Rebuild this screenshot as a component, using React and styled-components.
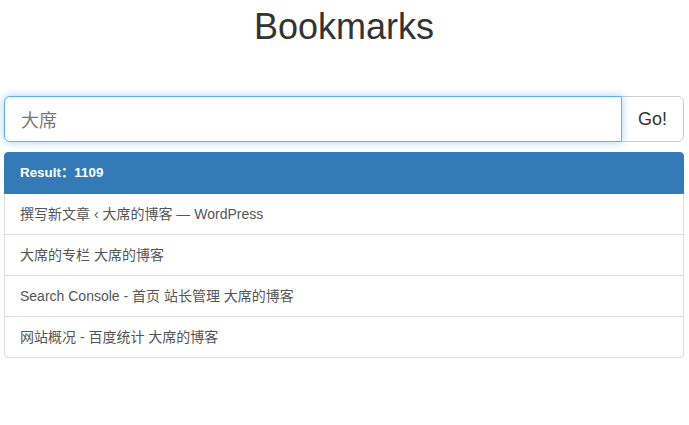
import React from "react";
import styled, { createGlobalStyle } from "styled-components";

const GlobalStyle = createGlobalStyle`
  * { box-sizing: border-box; }
  html, body { margin: 0; padding: 0; background: #fff; }
  body {
    font-family: "Liberation Sans", Arial, "Noto Sans CJK SC", sans-serif;
    font-size: 14px;
    line-height: 20px;
    color: #333;
  }
`;

const Page = styled.div`
  padding: 0 5px 0 4px;
`;

const Title = styled.h1`
  margin: 7px 0 0;
  font-size: 36px;
  line-height: 40px;
  font-weight: 500;
  text-align: center;
  color: #333;
`;

const SearchBar = styled.form`
  display: flex;
  margin-top: 49px;
`;

const SearchInput = styled.input`
  flex: 1;
  min-width: 0;
  height: 46px;
  padding: 10px 16px;
  font-family: "Liberation Sans", Arial, "Noto Sans CJK SC", sans-serif;
  font-size: 18px;
  line-height: 24px;
  color: #777;
  background: #fff;
  border: 1px solid #66afe9;
  border-radius: 6px 0 0 6px;
  outline: none;
  position: relative;
  z-index: 3;
  box-shadow: inset 0 1px 1px rgba(0, 0, 0, 0.075), 0 0 8px rgba(102, 175, 233, 0.6);
`;

const GoButton = styled.button`
  height: 46px;
  margin-left: -1px;
  padding: 10px 16px;
  font-family: "Liberation Sans", Arial, sans-serif;
  font-size: 18px;
  line-height: 24px;
  color: #333;
  background: #fff;
  border: 1px solid #ccc;
  border-radius: 0 6px 6px 0;
  cursor: pointer;
`;

const ResultList = styled.div`
  margin-top: 10px;
  display: flex;
  flex-direction: column;
`;

const Item = styled.div`
  position: relative;
  padding: 10px 15px;
  margin-bottom: -1px;
  line-height: 20px;
  color: ${(p) => (p.$active ? "#fff" : "#555")};
  font-weight: ${(p) => (p.$active ? "bold" : "normal")};
  font-size: ${(p) => (p.$active ? "13.4px" : "14px")};
  background: ${(p) => (p.$active ? "#337ab7" : "#fff")};
  border: 1px solid ${(p) => (p.$active ? "#337ab7" : "#ddd")};
  z-index: ${(p) => (p.$active ? 2 : 1)};
  &:first-child {
    border-radius: 4px 4px 0 0;
  }
  &:last-child {
    margin-bottom: 0;
    border-radius: 0 0 4px 4px;
  }
`;

const results = [
  "撰写新文章 ‹ 大席的博客 — WordPress",
  "大席的专栏 大席的博客",
  "Search Console - 首页 站长管理 大席的博客",
  "网站概况 - 百度统计 大席的博客",
];

export default function App() {
  return (
    <>
      <GlobalStyle />
      <Page>
        <Title>Bookmarks</Title>
        <SearchBar onSubmit={(e) => e.preventDefault()}>
          <SearchInput type="text" defaultValue="大席" />
          <GoButton type="submit">Go!</GoButton>
        </SearchBar>
        <ResultList>
          <Item $active>Result：1109</Item>
          {results.map((r) => (
            <Item key={r}>{r}</Item>
          ))}
        </ResultList>
      </Page>
    </>
  );
}
